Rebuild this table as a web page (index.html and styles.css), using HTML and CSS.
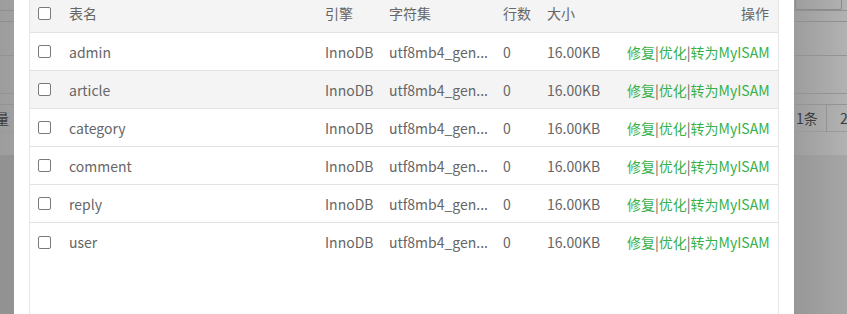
FILE: index.html
```html
<!DOCTYPE html>
<html lang="zh-CN">
<head>
<meta charset="utf-8">
<title>数据表</title>
<link rel="stylesheet" href="styles.css">
</head>
<body>
<div class="page">
  <div class="bg-band b1"><span class="bg-box"></span></div>
  <div class="bg-band b2"></div>
  <div class="bg-band b3"></div>
  <div class="bg-band b4"></div>
  <div class="bg-band b5"></div>
  <div class="bg-band b6">
    <span class="bg-left">量</span>
    <span class="bg-count">1条</span>
    <span class="bg-limit">20</span>
  </div>
  <div class="bg-band b7"></div>
  <div class="bg-rest"></div>
</div>

<div class="modal">
  <div class="table">
    <div class="row head">
      <div class="cell chk"><span class="checkbox"></span></div>
      <div class="cell">表名</div>
      <div class="cell">引擎</div>
      <div class="cell">字符集</div>
      <div class="cell">行数</div>
      <div class="cell">大小</div>
      <div class="cell right">操作</div>
    </div>
    <div class="row">
      <div class="cell chk"><span class="checkbox"></span></div>
      <div class="cell">admin</div>
      <div class="cell">InnoDB</div>
      <div class="cell">utf8mb4_gen...</div>
      <div class="cell">0</div>
      <div class="cell">16.00KB</div>
      <div class="cell right"><a class="op">修复</a><span class="sep">|</span><a class="op">优化</a><span class="sep">|</span><a class="op">转为MyISAM</a></div>
    </div>
    <div class="row hover">
      <div class="cell chk"><span class="checkbox"></span></div>
      <div class="cell">article</div>
      <div class="cell">InnoDB</div>
      <div class="cell">utf8mb4_gen...</div>
      <div class="cell">0</div>
      <div class="cell">16.00KB</div>
      <div class="cell right"><a class="op">修复</a><span class="sep">|</span><a class="op">优化</a><span class="sep">|</span><a class="op">转为MyISAM</a></div>
    </div>
    <div class="row">
      <div class="cell chk"><span class="checkbox"></span></div>
      <div class="cell">category</div>
      <div class="cell">InnoDB</div>
      <div class="cell">utf8mb4_gen...</div>
      <div class="cell">0</div>
      <div class="cell">16.00KB</div>
      <div class="cell right"><a class="op">修复</a><span class="sep">|</span><a class="op">优化</a><span class="sep">|</span><a class="op">转为MyISAM</a></div>
    </div>
    <div class="row">
      <div class="cell chk"><span class="checkbox"></span></div>
      <div class="cell">comment</div>
      <div class="cell">InnoDB</div>
      <div class="cell">utf8mb4_gen...</div>
      <div class="cell">0</div>
      <div class="cell">16.00KB</div>
      <div class="cell right"><a class="op">修复</a><span class="sep">|</span><a class="op">优化</a><span class="sep">|</span><a class="op">转为MyISAM</a></div>
    </div>
    <div class="row">
      <div class="cell chk"><span class="checkbox"></span></div>
      <div class="cell">reply</div>
      <div class="cell">InnoDB</div>
      <div class="cell">utf8mb4_gen...</div>
      <div class="cell">0</div>
      <div class="cell">16.00KB</div>
      <div class="cell right"><a class="op">修复</a><span class="sep">|</span><a class="op">优化</a><span class="sep">|</span><a class="op">转为MyISAM</a></div>
    </div>
    <div class="row last">
      <div class="cell chk"><span class="checkbox"></span></div>
      <div class="cell">user</div>
      <div class="cell">InnoDB</div>
      <div class="cell">utf8mb4_gen...</div>
      <div class="cell">0</div>
      <div class="cell">16.00KB</div>
      <div class="cell right"><a class="op">修复</a><span class="sep">|</span><a class="op">优化</a><span class="sep">|</span><a class="op">转为MyISAM</a></div>
    </div>
  </div>
</div>
</body>
</html>
```

FILE: styles.css
```css
* { box-sizing: border-box; }
html, body {
  margin: 0;
  padding: 0;
  width: 847px;
  height: 314px;
  overflow: hidden;
}
body {
  position: relative;
  font-family: "Noto Sans CJK SC", sans-serif;
  font-size: 14px;
  background: #989898;
}
.page {
  height: 314px;
  display: flex;
  flex-direction: column;
  background: linear-gradient(to right, #9d9d9d 0%, #a4a4a4 5%, #9a9a9a 93%, #b2b2b2 100%);
}
.bg-band {
  border-bottom: 1px solid #8f8f8f;
  position: relative;
  flex: none;
}
.b1 { height: 11px; }
.b2 { height: 11px; }
.b3 { height: 34px; border-bottom-color: #939393; }
.b4 { height: 38px; border-bottom-color: #939393; }
.b5 { height: 11px; border-bottom-color: #949494; }
.b6 {
  height: 27px;
  border-bottom-color: #9a9a9a;
  display: flex;
  align-items: center;
  color: #3c3c3c;
}
.b7 { height: 23px; border-bottom: none; }
.bg-rest {
  flex: 1;
  background: linear-gradient(to right, #929292 0%, #959595 5%, #959595 93%, #a6a6a6 100%);
}
.bg-box {
  position: absolute;
  left: 795px;
  top: -4px;
  width: 47px;
  height: 14px;
  border: 1px solid #8a8a8a;
  border-radius: 2px;
}
.bg-left { position: absolute; left: -5px; }
.bg-count { position: absolute; left: 796px; }
.bg-limit {
  position: absolute;
  left: 826px;
  top: -1px;
  height: 28px;
  line-height: 28px;
  border-left: 1px solid #939393;
  padding-left: 13px;
  white-space: nowrap;
}

.modal {
  position: absolute;
  left: 14px;
  top: 0;
  width: 780px;
  height: 314px;
  background: #fff;
  overflow: hidden;
  padding: 0 15px;
}
.table {
  margin-top: -6px;
  height: 330px;
  border-left: 1px solid #e6e6e6;
  border-right: 1px solid #e6e6e6;
  color: #666;
}
.row {
  display: grid;
  grid-template-columns: 29px 256px 64px 114px 44px 80px minmax(0, 1fr);
  height: 38px;
  align-items: center;
  border-bottom: 1px solid #e2e2e2;
}
.row.head {
  height: 39px;
  background: #f4f4f4;
}
.row.hover { background: #f4f4f4; }
.row.last { border-bottom: none; }
.cell {
  padding: 0 10px;
  white-space: nowrap;
  overflow: hidden;
  line-height: 20px;
}
.cell.chk {
  padding: 0 0 0 8px;
  display: flex;
  align-items: center;
}
.cell.right {
  text-align: right;
  padding-right: 9px;
  overflow: visible;
}
.checkbox {
  display: block;
  width: 13px;
  height: 13px;
  border: 1px solid #7a7a7a;
  border-radius: 2px;
  background: #fff;
}
.op {
  color: #36b14a;
  text-decoration: none;
}
.sep {
  color: #666;
}
```
